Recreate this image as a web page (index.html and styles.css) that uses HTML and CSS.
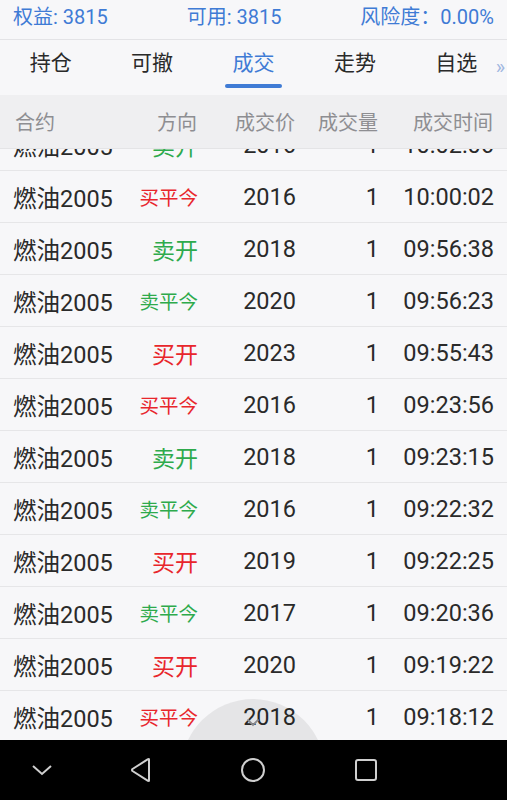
FILE: index.html
```html
<!DOCTYPE html>
<html lang="zh">
<head>
<meta charset="utf-8">
<title>成交</title>
<link rel="stylesheet" href="styles.css">
</head>
<body>
<div class="screen">
  <div class="topbar">
    <span>权益: 3815</span>
    <span>可用: 3815</span>
    <span>风险度：0.00%</span>
  </div>
  <div class="tabs">
    <div class="tab"><span>持仓</span></div>
    <div class="tab"><span>可撤</span></div>
    <div class="tab active"><span>成交</span><i class="bar"></i></div>
    <div class="tab"><span>走势</span></div>
    <div class="tab"><span>自选</span></div>
    <span class="more">»</span>
  </div>
  <div class="thead row-grid">
    <span class="c-name">合约</span>
    <span class="c-r">方向</span>
    <span class="c-r">成交价</span>
    <span class="c-r">成交量</span>
    <span class="c-r">成交时间</span>
  </div>
  <div class="list">
    <div class="rows">
      <div class="row row-grid"><span class="c-name">燃油2005</span><span class="c-r dir sell">卖开</span><span class="c-r">2016</span><span class="c-r">1</span><span class="c-r">10:02:06</span></div>
      <div class="row row-grid"><span class="c-name">燃油2005</span><span class="c-r dir buy small">买平今</span><span class="c-r">2016</span><span class="c-r">1</span><span class="c-r">10:00:02</span></div>
      <div class="row row-grid"><span class="c-name">燃油2005</span><span class="c-r dir sell">卖开</span><span class="c-r">2018</span><span class="c-r">1</span><span class="c-r">09:56:38</span></div>
      <div class="row row-grid"><span class="c-name">燃油2005</span><span class="c-r dir sell small">卖平今</span><span class="c-r">2020</span><span class="c-r">1</span><span class="c-r">09:56:23</span></div>
      <div class="row row-grid"><span class="c-name">燃油2005</span><span class="c-r dir buy">买开</span><span class="c-r">2023</span><span class="c-r">1</span><span class="c-r">09:55:43</span></div>
      <div class="row row-grid"><span class="c-name">燃油2005</span><span class="c-r dir buy small">买平今</span><span class="c-r">2016</span><span class="c-r">1</span><span class="c-r">09:23:56</span></div>
      <div class="row row-grid"><span class="c-name">燃油2005</span><span class="c-r dir sell">卖开</span><span class="c-r">2018</span><span class="c-r">1</span><span class="c-r">09:23:15</span></div>
      <div class="row row-grid"><span class="c-name">燃油2005</span><span class="c-r dir sell small">卖平今</span><span class="c-r">2016</span><span class="c-r">1</span><span class="c-r">09:22:32</span></div>
      <div class="row row-grid"><span class="c-name">燃油2005</span><span class="c-r dir buy">买开</span><span class="c-r">2019</span><span class="c-r">1</span><span class="c-r">09:22:25</span></div>
      <div class="row row-grid"><span class="c-name">燃油2005</span><span class="c-r dir sell small">卖平今</span><span class="c-r">2017</span><span class="c-r">1</span><span class="c-r">09:20:36</span></div>
      <div class="row row-grid"><span class="c-name">燃油2005</span><span class="c-r dir buy">买开</span><span class="c-r">2020</span><span class="c-r">1</span><span class="c-r">09:19:22</span></div>
      <div class="row row-grid"><span class="c-name">燃油2005</span><span class="c-r dir buy small">买平今</span><span class="c-r">2018</span><span class="c-r">1</span><span class="c-r">09:18:12</span></div>
    </div>
    <div class="pull">
      <svg width="14" height="9" viewBox="0 0 14 9"><path d="M1.5 1.5 L7 7 L12.5 1.5" fill="none" stroke="#8a8a8e" stroke-width="1.8"/></svg>
    </div>
  </div>
  <div class="navbar">
    <svg width="24" height="14" viewBox="0 0 24 14"><path d="M3 3 L12 11 L21 3" fill="none" stroke="#cfcfcf" stroke-width="2"/></svg>
    <svg width="24" height="26" viewBox="0 0 24 26"><path d="M20 2.5 L20 23.5 Q20 24.5 19 23.8 L3.5 14 Q2.5 13 3.5 12 L19 2.2 Q20 1.5 20 2.5 Z" fill="none" stroke="#cfcfcf" stroke-width="2" stroke-linejoin="round"/></svg>
    <svg width="26" height="26" viewBox="0 0 26 26"><circle cx="13" cy="13" r="11" fill="none" stroke="#cfcfcf" stroke-width="2"/></svg>
    <svg width="24" height="24" viewBox="0 0 24 24"><rect x="2" y="2" width="20" height="20" rx="2" fill="none" stroke="#cfcfcf" stroke-width="2"/></svg>
  </div>
</div>
</body>
</html>
```

FILE: styles.css
```css
* { box-sizing: border-box; }
html, body { margin: 0; padding: 0; }
body {
  width: 507px;
  height: 800px;
  overflow: hidden;
  background: #f7f7f9;
  font-family: Roboto, "Noto Sans CJK SC", sans-serif;
  color: #2a2a2a;
}
.screen {
  display: flex;
  flex-direction: column;
  height: 800px;
}
.topbar {
  height: 40px;
  flex: none;
  display: flex;
  justify-content: space-between;
  align-items: center;
  padding: 0 13px 9px 13px;
  background: #f7f7f9;
  border-bottom: 1px solid #e3e3e6;
  color: #3f7bd5;
  font-size: 20px;
}
.tabs {
  height: 55px;
  flex: none;
  display: grid;
  grid-template-columns: repeat(5, 1fr);
  position: relative;
  background: #f7f7f9;
}
.tab {
  display: flex;
  flex-direction: column;
  align-items: center;
  padding-top: 8px;
  font-size: 21px;
  line-height: 31px;
  color: #2a2a2a;
}
.tab.active { color: #3f7bd5; }
.tab .bar {
  display: block;
  margin-top: 5px;
  width: 57px;
  height: 4px;
  border-radius: 2px;
  background: #3f7bd5;
}
.more {
  position: absolute;
  right: 2px;
  top: 15px;
  font-size: 20px;
  color: #9fb6e0;
}
.row-grid {
  display: grid;
  grid-template-columns: 110px 75px 98px 83px 115px;
  align-items: center;
  padding: 0 13px;
}
.c-name { text-align: left; white-space: nowrap; }
.c-r { text-align: right; white-space: nowrap; }
.thead {
  height: 54px;
  flex: none;
  background: #efeff1;
  color: #8e8e92;
  font-size: 20px;
  border-bottom: 1px solid #e4e4e6;
  position: relative;
  z-index: 2;
}
.thead .c-name { padding-left: 2px; }
.thead .c-r { margin-right: 1px; }
.list {
  flex: 1;
  overflow: hidden;
  position: relative;
}
.rows { margin-top: -30px; }
.row {
  height: 52px;
  border-bottom: 1px solid #e6e6e8;
  font-size: 23.5px;
  color: #2a2a2a;
}
.dir { font-size: 23px; }
.dir.small { font-size: 19.5px; }
.buy { color: #e8262c; }
.sell { color: #2eaa4c; }
.pull {
  position: absolute;
  left: 181px;
  bottom: -103px;
  width: 144px;
  height: 144px;
  border-radius: 50%;
  background: rgba(0, 0, 0, 0.07);
  display: flex;
  justify-content: center;
  padding-top: 19px;
}
.navbar {
  height: 60px;
  flex: none;
  background: #000;
  display: grid;
  grid-template-columns: 84px 113px 112px 113px 85px;
  align-items: center;
  justify-items: center;
  position: relative;
  z-index: 3;
}
```
